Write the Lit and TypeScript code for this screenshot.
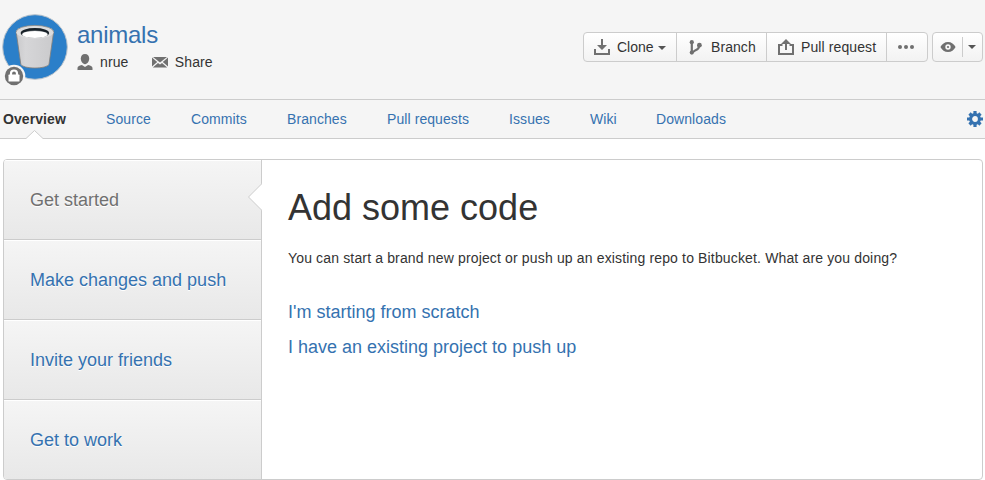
import { LitElement, html, css, svg } from "lit";
import { customElement, property } from "lit/decorators.js";
import { classMap } from "lit/directives/class-map.js";

const shapes: Record<string, unknown> = {
  user: svg`<path d="M8 0C10.7 0 12.2 1.8 12.2 4.6C12.2 7.4 10.5 10.2 8 10.2S3.8 7.4 3.8 4.6C3.8 1.8 5.3 0 8 0Z"/><path d="M.5 16V14.3C.5 12.3 2 11.7 4.9 11L8 12.9L11.1 11C14 11.7 15.5 12.3 15.5 14.3V16Z"/>`,
  mail: svg`<path d="M1 3H15L8 8.6Z"/><path d="M0 3.6L5.2 8L0 12.6ZM16 3.6L10.8 8L16 12.6Z"/><path d="M.8 13.5L6 8.9L8 10.6L10 8.9L15.2 13.5Z"/>`,
  clone: svg`<path d="M7 0H9V6H13L8 11L3 6H7Z"/><path d="M0 10H2V14H14V10H16V16H0Z"/>`,
  branch: svg`<circle cx="4.8" cy="3.2" r="2.1"/><circle cx="4.8" cy="13.6" r="2.1"/><circle cx="12.4" cy="6.2" r="2.4"/><path d="M4.8 3V13.6M12.2 6.5C12.2 9.5 10.8 10.3 8.6 11.2L5 13.6" fill="none" stroke="#707070" stroke-width="2.2"/>`,
  pull: svg`<path d="M8 0L13 5H9V11H7V5H3Z"/><path d="M0 5H4.5V7H2V14H14V7H11.5V5H16V16H0Z"/>`,
  more: svg`<circle cx="2" cy="8" r="2"/><circle cx="8" cy="8" r="2"/><circle cx="14" cy="8" r="2"/>`,
  eye: svg`<path fill-rule="evenodd" d="M.4 8C2 5 4.6 3 8 3S14 5 15.6 8C14 11 11.4 13 8 13S2 11 .4 8ZM8 5.3A2.7 2.7 0 1 0 8 10.7A2.7 2.7 0 1 0 8 5.3Z"/><circle cx="8" cy="8" r="1.1"/>`,
  gear: svg`<g fill="none" stroke="#3572b0"><circle cx="8" cy="8" r="4.4" stroke-width="3"/><path stroke-width="3.2" d="M8 0V3M8 13V16M0 8H3M13 8H16"/><path stroke-width="3.2" d="M2.5 2.5L4.5 4.5M11.5 11.5L13.5 13.5M13.5 2.5L11.5 4.5M4.5 11.5L2.5 13.5"/></g>`,
};

@customElement("ui-icon")
class UiIcon extends LitElement {
  @property() name = "";
  static styles = css`
    :host { display: block; width: 16px; height: 16px; flex: none; }
    svg { display: block; fill: #707070; }
  `;
  render() {
    return html`<svg width="16" height="16" viewBox="0 0 16 16">${shapes[this.name]}</svg>`;
  }
}

@customElement("repo-avatar")
class RepoAvatar extends LitElement {
  static styles = css`:host, svg { display: block; }`;
  render() {
    return html`<svg width="70" height="76" viewBox="0 12 70 76">
      <defs>
        <linearGradient id="pail"><stop offset="0" stop-color="#c9c9cb"/><stop offset=".25" stop-color="#d6d6d8"/><stop offset="1" stop-color="#cacacc"/></linearGradient>
      </defs>
      <circle cx="35" cy="47" r="32.3" fill="#2b7fc9" stroke="#b8c2cb"/>
      <path d="M16.2 32L20.8 64.2C22.5 69.3 47.3 69.3 49 64.2L53.6 32Z" fill="url(#pail)" stroke="#857f79" stroke-width=".8"/>
      <ellipse cx="34.9" cy="32" rx="18.8" ry="6.6" fill="#dcdcdd"/>
      <path d="M16.1 32A18.8 6.6 0 0 1 53.7 32" fill="none" stroke="#918b84" stroke-width=".8"/>
      <ellipse cx="34.9" cy="33" rx="14.2" ry="5" fill="#172027"/>
      <path d="M22.5 33.2Q34.9 28.4 47.3 33.2" fill="none" stroke="#9aa1a5" stroke-width=".6"/>
      <ellipse cx="34.9" cy="34.5" rx="12.8" ry="3.5" fill="#fff"/>
      <circle cx="14" cy="76" r="11.3" fill="#f5f5f5"/>
      <circle cx="14" cy="76" r="9.2" fill="#707070"/>
      <path d="M11 76V73.5A3 3 0 0 1 17 73.5V76" fill="none" stroke="#fff" stroke-width="2.2"/>
      <rect x="8.5" y="74.6" width="11" height="7" rx=".6" fill="#fff"/>
    </svg>`;
  }
}

@customElement("app-root")
class AppRoot extends LitElement {
  static styles = css`
    * { box-sizing: border-box; }
    :host { display: block; height: 480px; overflow: hidden; background: #fff; color: #333; font: 14px/20px "Liberation Sans", Arial, sans-serif; }
    a { color: #3572b0; text-decoration: none; }
    .header { display: flex; height: 100px; padding: 12px 2px 0 0; background: #f5f5f5; border-bottom: 1px solid #ccc; }
    .identity { flex: 1; padding: 8px 0 0 7px; }
    .name { display: block; font-size: 24px; line-height: 30px; letter-spacing: -.25px; }
    .meta { display: flex; margin-top: 2px; letter-spacing: .1px; }
    .meta span { display: flex; align-items: center; gap: 7px; margin-right: 23.4px; }
    .actions { display: flex; height: 30px; margin-top: 20px; gap: 4px; }
    .group { display: flex; border: 1px solid #ccc; border-radius: 4px; background: linear-gradient(#fff, #f2f2f2); }
    .button { display: flex; align-items: center; gap: 7px; padding: 0 10px; white-space: nowrap; }
    .button + .button { border-left: 1px solid #ccc; }
    .clone { width: 92px; }
    .branch { width: 90px; gap: 8px; letter-spacing: .07px; }
    .pull { width: 120px; padding-left: 11px; letter-spacing: .1px; }
    .more { width: 41px; padding-left: 11px; }
    .watch { width: 51px; align-items: center; padding-left: 7px; }
    .split { width: 1px; height: 20px; background: #ccc; margin: 0 5px 0 6px; }
    .caret { border: 4px solid transparent; border-top-color: #555; border-bottom: 0; }
    .clone .caret { margin: 2px 0 0 -3px; }
    .nav { display: grid; grid-template-columns: 63px 45px 56px 60px 82px 41px 26px 70px 1fr; align-items: center; gap: 40px; height: 39px; padding: 0 2px 0 3px; background: #f5f5f5; border-bottom: 1px solid #ccc; }
    .tab { position: relative; white-space: nowrap; letter-spacing: .08px; }
    .current { color: #333; font-weight: bold; }
    .notch { position: absolute; left: 23px; top: 21px; display: block; }
    .gear { justify-self: end; }
    .panel { display: flex; height: 321px; margin: 20px 2px 0 3px; border: 1px solid #ccc; border-radius: 4px; overflow: hidden; }
    .steps { width: 258px; border-right: 1px solid #ccc; }
    .step { position: relative; display: flex; align-items: center; height: 80px; padding: 1px 0 0 26px; font-size: 18px; background: linear-gradient(#f5f5f5, #e8e8e8); border-bottom: 1px solid #ccc; box-shadow: inset 0 1px #fff; text-shadow: 0 1px #fff; }
    .step:last-child { height: 79px; padding-top: 0; border-bottom: 0; }
    .active { color: #707070; }
    .pointer { position: absolute; right: -1px; top: 23px; display: block; }
    .content { padding: 27px 26px; }
    h1 { margin: 0; font-size: 36px; line-height: 42px; font-weight: normal; }
    p { margin: 19px 0 33px; letter-spacing: .151px; }
    .choice { display: block; font-size: 18px; line-height: 22px; margin-bottom: 13px; }
  `;

  tabs = ["Overview", "Source", "Commits", "Branches", "Pull requests", "Issues", "Wiki", "Downloads"];
  steps = ["Get started", "Make changes and push", "Invite your friends", "Get to work"];

  render() {
    return html`
      <header class="header">
        <repo-avatar></repo-avatar>
        <div class="identity">
          <a class="name">animals</a>
          <div class="meta">
            <span><ui-icon name="user"></ui-icon>nrue</span>
            <span><ui-icon name="mail"></ui-icon>Share</span>
          </div>
        </div>
        <div class="actions">
          <div class="group">
            <div class="button clone"><ui-icon name="clone"></ui-icon>Clone<i class="caret"></i></div>
            <div class="button branch"><ui-icon name="branch"></ui-icon>Branch</div>
            <div class="button pull"><ui-icon name="pull"></ui-icon>Pull request</div>
            <div class="button more"><ui-icon name="more"></ui-icon></div>
          </div>
          <div class="group watch"><ui-icon name="eye"></ui-icon><i class="split"></i><i class="caret"></i></div>
        </div>
      </header>
      <nav class="nav">
        ${this.tabs.map((t, i) => html`<a class=${classMap({ tab: true, current: i === 0 })}>${t}${i === 0
          ? html`<svg class="notch" width="17" height="9" viewBox="0 0 17 9"><path d="M0 9V8.5L8.5 .5L17 8.5V9Z" fill="#fff"/><path d="M0 8.5L8.5 .5L17 8.5" fill="none" stroke="#ccc"/></svg>`
          : ""}</a>`)}
        <ui-icon class="gear" name="gear"></ui-icon>
      </nav>
      <main class="panel">
        <div class="steps">
          ${this.steps.map((s, i) => html`<a class=${classMap({ step: true, active: i === 0 })}>${s}${i === 0
            ? html`<svg class="pointer" width="14" height="28" viewBox="0 0 14 28"><path d="M14 .5L.5 14L14 27.5Z" fill="#fff"/><path d="M14 .5L.5 14L14 27.5" fill="none" stroke="#ccc"/></svg>`
            : ""}</a>`)}
        </div>
        <section class="content">
          <h1>Add some code</h1>
          <p>You can start a brand new project or push up an existing repo to Bitbucket. What are you doing?</p>
          <a class="choice">I'm starting from scratch</a>
          <a class="choice">I have an existing project to push up</a>
        </section>
      </main>`;
  }
}
